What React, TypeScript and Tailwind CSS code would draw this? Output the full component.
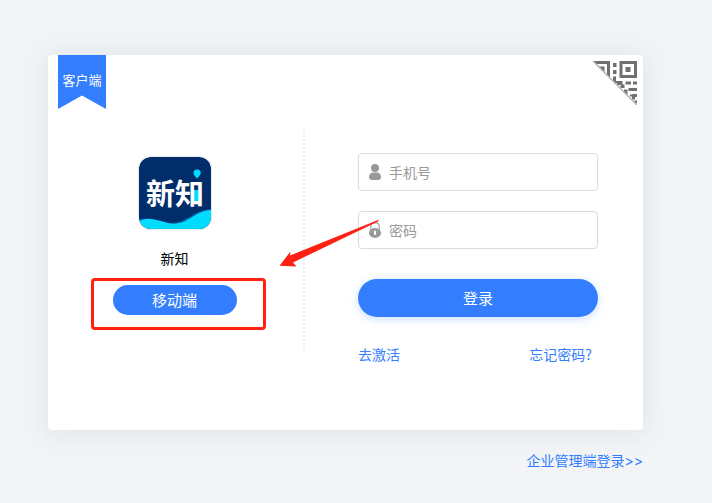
import React from "react";

function ClientRibbon() {
  return (
    <div className="absolute left-[10px] top-0 h-[54px] w-12 bg-[#337eff] pt-4 text-center text-[13px] leading-[18px] text-white [clip-path:polygon(0_0,100%_0,100%_100%,50%_75%,0_100%)]">
      客户端
    </div>
  );
}

function QrCorner() {
  return (
    <button type="button" aria-label="扫码登录" className="absolute right-[6px] top-[6px] h-11 w-11">
      <svg viewBox="0 0 44 44" className="h-full w-full" fill="#707070">
        <defs>
          <clipPath id="corner">
            <path d="M0 0H44V44Z" />
          </clipPath>
        </defs>
        <g clipPath="url(#corner)">
          <path d="M0 0H17V17H14V3H0Z" />
          <path d="M6 5.500H11.500V11H6Z" />
          <path fillRule="evenodd" d="M26.500 0H44V17H26.500ZM29.500 3V14H41V3Z" />
          <path d="M32.500 6H37.500V11H32.500Z" />
          <path d="M20 2H23.500V6H20ZM20 9H23.500V13H20ZM20 15.500H23V20H29.500V23.500H31.500V27H27.500V24H24V22H20Z" />
          <path d="M32.500 20.500H38V23.500H32.500ZM40 20.500H44V23.500H40ZM35.500 27H44V30H35.500ZM31 28.500H34.500V33H31ZM39.500 33H44V36H42V38.500H39V35.500H37V33.500H39.500ZM41.500 39.500H44V42H41.500Z" />
        </g>
        <path d="M0 0L44 44" stroke="#b4b4b4" strokeWidth="1.500" />
      </svg>
    </button>
  );
}

function AppLogo() {
  return (
    <div className="grid h-[74px] w-[74px] place-items-center overflow-hidden rounded-xl border border-[#e8eaed]">
      <svg viewBox="0 0 72 72" className="h-[72px] w-[72px]" role="img" aria-label="新知">
        <defs>
          <clipPath id="tile">
            <rect width="72" height="72" rx="12" />
          </clipPath>
        </defs>
        <g clipPath="url(#tile)">
          <rect width="72" height="72" fill="#012d6b" />
          <path d="M0 62C11 60 18 66 30 66C48 66 54 53 72 52V72H0Z" fill="#0759a0" />
          <path d="M0 64C10 59 18 63 29 66C48 70 54 54 72 53V72H0Z" fill="#00dcff" />
          <rect x="54" y="33" width="7" height="12" fill="#00dcff" />
          <text
            x="7"
            y="48"
            fill="#ffffff"
            fontSize="29"
            fontWeight="700"
            fontFamily="'Noto Sans CJK SC', sans-serif"
          >
            新知
          </text>
          <path d="M58 22C57.500 20 54.500 18.500 54.500 16A3.600 3.600 0 0 1 61.700 16C61.700 18.500 58.500 20 58 22Z" fill="#00dcff" />
        </g>
      </svg>
    </div>
  );
}

function UserIcon() {
  return (
    <svg viewBox="0 0 12 16" className="h-4 w-3" fill="#999999" aria-hidden="true">
      <circle cx="6" cy="4" r="4" />
      <path d="M0 13C0 10 2 8.500 4 8.500H8C10 8.500 12 10 12 13C12 15 11 16 9 16H3C1 16 0 15 0 13Z" />
    </svg>
  );
}

function LockIcon() {
  return (
    <svg viewBox="0 0 12 16" className="h-4 w-3" aria-hidden="true">
      <path d="M1.800 8V4.500C1.800 2 3.500 0.800 6 0.800S10.200 2 10.200 4.500V8" fill="none" stroke="#b0b0b0" strokeWidth="1.400" />
      <ellipse cx="6" cy="11" rx="6" ry="5" fill="#999999" />
      <rect x="5" y="8.500" width="2" height="4.500" rx="1" fill="#ffffff" />
    </svg>
  );
}

type FieldProps = { id: string; type: string; label: string; icon: React.ReactNode };

function Field({ id, type, label, icon }: FieldProps) {
  return (
    <div className="flex h-[38px] items-center gap-2 rounded border border-[#dcdcdc] px-[10px]">
      <label htmlFor={id} aria-label={label}>
        {icon}
      </label>
      <input
        id={id}
        type={type}
        placeholder={label}
        className="h-full min-w-0 flex-1 bg-transparent text-sm text-[#333333] outline-none placeholder:text-[#999999]"
      />
    </div>
  );
}

function ArrowMark() {
  return (
    <svg
      viewBox="0 0 100 48"
      className="pointer-events-none absolute left-[231px] top-[164px] h-12 w-[100px]"
      fill="#ff2014"
      aria-hidden="true"
    >
      <path d="M0.500 46.700L11.500 32.500L11 36.500L99 1L100 2L14 43.500L17.500 47.500Z" />
    </svg>
  );
}

export default function App() {
  return (
    <main className="min-h-screen bg-[#f2f4f6] pb-8 pl-12 pr-[69px] pt-[55px] font-['Noto_Sans_CJK_SC',sans-serif] text-sm leading-5">
      <section className="relative flex rounded bg-white shadow-[0_2px_24px_rgba(160,180,190,0.25)]">
        <ClientRibbon />
        <QrCorner />

        <div className="flex w-3/7 flex-col items-center pr-0.5 pt-[101px]">
          <AppLogo />
          <h1 className="mt-[18px] text-sm leading-5 text-black">新知</h1>
          <div className="relative mt-[17px]">
            <button type="button" className="block h-[30px] w-[124px] rounded-full bg-[#337eff] text-[15px] text-white">
              移动端
            </button>
            <span className="pointer-events-none absolute -bottom-[15px] -left-[22px] -right-[29px] -top-[7px] rounded border-3 border-[#ff2014]" />
          </div>
        </div>

        <div className="mb-[81px] mt-[76px] border-l-2 border-dotted border-[#ebebeb]" />

        <form className="flex-1 pb-[65px] pl-[53px] pr-[45px] pt-[98px]">
          <div className="flex flex-col gap-5">
            <Field id="phone" type="tel" label="手机号" icon={<UserIcon />} />
            <Field id="password" type="password" label="密码" icon={<LockIcon />} />
          </div>
          <button
            type="button"
            className="mt-[30px] h-[38px] w-full rounded-full bg-[#337eff] text-[15px] text-white shadow-[0_2px_10px_rgba(51,126,255,0.25)]"
          >
            登录
          </button>
          <div className="mt-[27px] flex justify-between pb-px pr-[6px] text-[#337eff]">
            <a href="#activate">去激活</a>
            <a href="#forgot">忘记密码?</a>
          </div>
        </form>

        <ArrowMark />
      </section>

      <div className="mt-5 text-right text-[#337eff]">
        <a href="#enterprise">
          企业管理端登录<span className="font-['Inter',sans-serif]">&gt;&gt;</span>
        </a>
      </div>
    </main>
  );
}
